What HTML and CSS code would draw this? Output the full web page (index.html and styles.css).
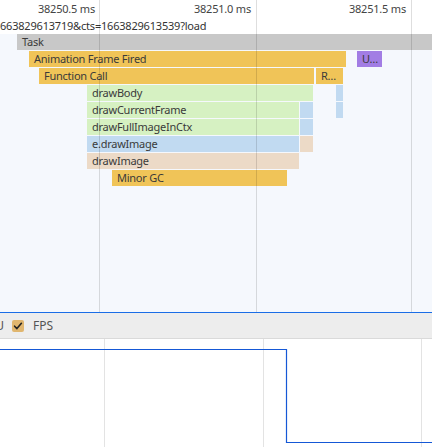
FILE: index.html
```html
<!DOCTYPE html>
<html>
<head>
<meta charset="utf-8">
<link rel="stylesheet" href="styles.css">
</head>
<body>
<div class="top">
  <div class="ruler">
    <div class="tick w1">38250.5 ms</div>
    <div class="tick w2">38251.0 ms</div>
    <div class="tick w3">38251.5 ms</div>
  </div>
  <div class="url">663829613719&amp;cts=1663829613539?load</div>
  <div class="flame">
    <div class="row"><div class="bar gray" style="margin-left:17px;width:415px">Task</div></div>
    <div class="row">
      <div class="bar yellow" style="margin-left:29px;width:317px">Animation Frame Fired</div>
      <div class="bar purple" style="margin-left:11px;width:25px">U…</div>
    </div>
    <div class="row">
      <div class="bar yellow" style="margin-left:39px;width:275px">Function Call</div>
      <div class="bar yellow" style="margin-left:2px;width:27px">R…</div>
    </div>
    <div class="row">
      <div class="bar green" style="margin-left:87px;width:226px">drawBody</div>
      <div class="bar blue" style="margin-left:23px;width:7px"></div>
    </div>
    <div class="row">
      <div class="bar green" style="margin-left:87px;width:212px">drawCurrentFrame</div>
      <div class="bar blue" style="margin-left:1px;width:13px"></div>
      <div class="bar blue" style="margin-left:23px;width:7px"></div>
    </div>
    <div class="row">
      <div class="bar green" style="margin-left:87px;width:212px">drawFullImageInCtx</div>
      <div class="bar blue" style="margin-left:1px;width:13px"></div>
    </div>
    <div class="row">
      <div class="bar blue" style="margin-left:87px;width:212px">e.drawImage</div>
      <div class="bar tan" style="margin-left:1px;width:13px"></div>
    </div>
    <div class="row">
      <div class="bar tan" style="margin-left:87px;width:212px">drawImage</div>
    </div>
    <div class="row">
      <div class="bar yellow" style="margin-left:112px;width:175px">Minor GC</div>
    </div>
  </div>
  <div class="grid">
    <i class="g1"></i><i class="g2"></i><i class="g3"></i>
  </div>
</div>
<div class="toolbar">
  <span class="clip"><span>CPU</span></span>
  <span class="check">
    <svg width="12" height="12" viewBox="0 0 12 12"><rect x="0" y="0" width="12" height="12" rx="2" fill="#e0b66f"/><path d="M2.6 6.2 L4.9 8.6 L9.4 3.3" fill="none" stroke="#222" stroke-width="1.6" stroke-linecap="round" stroke-linejoin="round"/></svg>
  </span>
  <span class="fps-label">FPS</span>
</div>
<div class="fps">
  <svg width="432" height="108" viewBox="0 0 432 108">
    <line x1="104.5" y1="0" x2="104.5" y2="108" stroke="#e3e3e3"/>
    <line x1="263.5" y1="0" x2="263.5" y2="108" stroke="#e3e3e3"/>
    <line x1="421.5" y1="0" x2="421.5" y2="108" stroke="#e3e3e3"/>
    <path d="M0 10.5 H286.5 V103.5 H432" fill="none" stroke="#1558d6" stroke-width="1.2"/>
  </svg>
</div>
</body>
</html>
```

FILE: styles.css
```css
html, body {
  margin: 0;
  padding: 0;
  background: #fff;
  font-family: "Noto Sans", "Open Sans", sans-serif;
  color: #333;
  overflow: hidden;
}

.top {
  position: relative;
  height: 312px;
  background: #f5f8fd;
  border-bottom: 1px solid #1a6de6;
}

.ruler {
  display: flex;
  height: 17px;
  background: #fff;
  font-size: 11px;
  line-height: 17px;
  letter-spacing: -0.2px;
  color: #444;
}

.tick {
  flex: none;
  text-align: right;
  padding-right: 5px;
  box-sizing: border-box;
}

.w1 { width: 100px; }
.w2 { width: 156px; }
.w3 { width: 155px; }

.url {
  height: 17px;
  background: #fff;
  font-size: 11px;
  line-height: 17px;
  letter-spacing: -0.2px;
  color: #333;
  white-space: nowrap;
}

.flame {
  display: flex;
  flex-direction: column;
  gap: 1px;
}

.row {
  display: flex;
  height: 16px;
}

.bar {
  flex: none;
  height: 16px;
  box-sizing: border-box;
  padding-left: 5px;
  font-size: 11px;
  line-height: 16px;
  letter-spacing: -0.25px;
  color: #3a3a3a;
  white-space: nowrap;
  overflow: hidden;
}

.gray { background: #c8c8c8; }
.yellow { background: #f0c458; }
.purple { background: #a27de4; }
.green { background: #d6f1c2; }
.blue { background: #c1daf1; }
.tan { background: #ecdac7; }

.grid i {
  position: absolute;
  top: 0;
  bottom: 0;
  width: 1px;
  background: rgba(0, 0, 0, 0.13);
}

.g1 { left: 99px; }
.g2 { left: 256px; }
.g3 { left: 411px; }

.toolbar {
  display: flex;
  align-items: center;
  height: 25px;
  background: #ededed;
  border-bottom: 1px solid #dadada;
  font-size: 12px;
  color: #555;
}

.clip {
  display: flex;
  justify-content: flex-end;
  width: 4px;
  overflow: hidden;
  white-space: nowrap;
}

.check {
  display: flex;
  margin-left: 8px;
  width: 12px;
  height: 12px;
}

.fps-label {
  margin-left: 9px;
}

.fps {
  height: 108px;
  background: #fff;
}

.fps svg {
  display: block;
}
```
